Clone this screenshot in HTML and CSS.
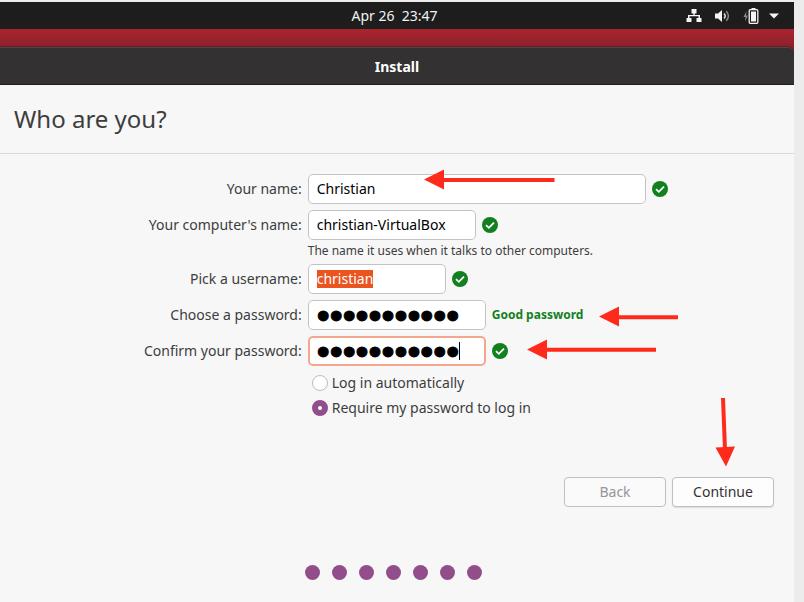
FILE: index.html
```html
<!DOCTYPE html>
<html lang="en">
<head>
<meta charset="utf-8">
<title>Install</title>
<link rel="stylesheet" href="styles.css">
</head>
<body>
<svg class="defs" width="0" height="0" aria-hidden="true">
  <symbol id="ok" viewBox="0 0 16 16">
    <circle cx="8" cy="8" r="8" fill="#12801f"/>
    <path d="M4 8.2l2.8 2.6L12 5.6" fill="none" stroke="#fff" stroke-width="1.8"/>
  </symbol>
</svg>
<div class="screen">
  <header class="topbar">
    <time class="clock">Apr 26&nbsp; 23:47</time>
    <div class="tray">
      <svg width="16" height="14" viewBox="0 0 16 14" fill="#f5f4f0"><path d="M5.500 0h5v4.500H8.700V6H14v3h1.500v4h-5V9h2V7.300h-9V9h2v4h-5V9H2V6h5.300V4.500H5.500z"/></svg>
      <svg class="volume" width="15" height="14" viewBox="0 0 15 14" fill="none"><path d="M0 4.500h3L7 1v12L3 9.500H0z" fill="#f5f4f0"/><path d="M9 4.500q2.400 2.500 0 5" stroke="#e0dfdc" stroke-width="1.500"/><path d="M11.300 2.200q4.200 4.800 0 9.600" stroke="#8a8986" stroke-width="1.500"/></svg>
      <svg class="battery" width="16" height="16" viewBox="0 0 16 16"><path d="M3.500 3L.5 9h2L2 13.500 5 7.500H3z" fill="#888"/><path d="M8.500 .5h4" stroke="#f5f4f0"/><rect x="6.200" y="1.700" width="8.600" height="13.600" rx="1" fill="none" stroke="#f5f4f0" stroke-width="1.300"/><rect x="8" y="3.500" width="5" height="10" fill="#f5f4f0"/></svg>
      <svg class="chevron" width="10" height="6" viewBox="0 0 10 6"><path d="M0 .5h10L5 5.500z" fill="#f5f4f0"/></svg>
    </div>
  </header>
  <div class="desktop">
    <div class="titlebar">Install</div>
  </div>
  <main class="window">
    <h1>Who are you?</h1>
    <form class="form">
      <label class="label" for="name">Your name:</label>
      <div class="field"><span class="entry full"><input id="name" type="text" value="Christian"></span><svg class="ok"><use href="#ok"/></svg></div>

      <label class="label" for="host">Your computer's name:</label>
      <div class="field"><span class="entry host"><input id="host" type="text" value="christian-VirtualBox"></span><svg class="ok"><use href="#ok"/></svg></div>
      <p class="hint">The name it uses when it talks to other computers.</p>

      <label class="label" for="user">Pick a username:</label>
      <div class="field"><span class="entry user"><input class="selected" id="user" type="text" value="christian"></span><svg class="ok"><use href="#ok"/></svg></div>

      <label class="label" for="pass">Choose a password:</label>
      <div class="field"><span class="entry pass"><input id="pass" type="password" value="ubuntu12345"></span><strong class="strength">Good password</strong></div>

      <label class="label" for="confirm">Confirm your password:</label>
      <div class="field"><span class="entry pass focused"><input id="confirm" type="password" value="ubuntu12345"><span class="caret"></span></span><svg class="ok"><use href="#ok"/></svg></div>

      <div class="choices">
        <label class="choice"><input type="radio" name="login">Log in automatically</label>
        <label class="choice"><input type="radio" name="login" checked>Require my password to log in</label>
      </div>
    </form>
    <div class="actions">
      <button type="button" disabled>Back</button>
      <button type="button">Continue</button>
    </div>
    <div class="steps"><i></i><i></i><i></i><i></i><i></i><i></i><i></i></div>
  </main>
  <svg class="arrows" width="794" height="602" viewBox="0 0 794 602" aria-hidden="true">
    <g stroke="#fe2b1c" stroke-width="4" fill="none"><path d="M442 180H554.500M618 317.300H678M545 349.700H656M723 398l2 52"/></g>
    <g fill="#fe2b1c"><path d="M424 179.500l20-10v20zM599 316.500l20-10v20zM527 349.500l20-10v20zM726 466.500l-10.500-19 19.500-1z"/></g>
  </svg>
</div>
</body>
</html>
```
FILE: styles.css
```css
* { box-sizing: border-box; }

body {
  margin: 0;
  background: #ececec;
  color: #3d3d3d;
  font: 14px/20px "Noto Sans", "Open Sans", sans-serif;
}

.defs { position: absolute; }

.screen {
  position: relative;
  display: flex;
  flex-direction: column;
  min-height: 100vh;
  margin-right: 10px;
  padding-top: 2px;
}

.topbar {
  display: grid;
  grid-template-columns: 1fr auto 1fr;
  align-items: center;
  height: 27px;
  padding: 0 15px 0 10px;
  background: #1d1d1d;
  color: #f2f2f2;
}

.clock { grid-column: 2; }

.tray {
  display: flex;
  justify-content: flex-end;
  align-items: center;
}

.volume { margin-left: 13px; }
.battery { margin-left: 13px; }
.chevron { margin-left: 10px; }

.desktop {
  padding-top: 18px;
  background: linear-gradient(#a9252d, #8c202b 18px);
}

.titlebar {
  height: 38px;
  border-top: 1px solid #4a4848;
  border-bottom: 1px solid #251a22;
  border-top-right-radius: 6px;
  background: #333132;
  color: #fff;
  font-weight: 700;
  line-height: 38px;
  text-align: center;
  box-shadow: 0 -1px #701a24;
}

.window {
  flex: 1;
  display: flex;
  flex-direction: column;
  background: #f7f7f7;
}

h1 {
  margin: 0;
  padding: 18px 14px;
  border-bottom: 1px solid #dadada;
  font-size: 24px;
  font-weight: 400;
  line-height: 32px;
}

.form {
  display: grid;
  grid-template-columns: 38% 1fr;
  column-gap: 6px;
  row-gap: 6px;
  padding-top: 20px;
}

.label {
  line-height: 30px;
  text-align: right;
}

.field {
  display: flex;
  align-items: center;
  gap: 6px;
}

.entry {
  display: flex;
  align-items: center;
  height: 30px;
  padding: 0 8px;
  border: 1px solid #c3c3c3;
  border-radius: 5px;
  background: #fff;
  overflow: hidden;
}

.entry input {
  width: 100%;
  padding: 0;
  border: 0;
  outline: 0;
  background: none;
  color: #000;
  font: inherit;
}

.full { width: 338px; }
.host { width: 168px; }
.user { width: 138px; }
.pass { width: 178px; }

.entry .selected {
  width: auto;
  height: 18px;
  field-sizing: content;
  background: #e95420;
  color: #fff;
}

.pass input {
  width: auto;
  padding-top: 2px;
  field-sizing: content;
  font: 37px/28px "Liberation Sans", sans-serif;
  -webkit-text-stroke: 1px #000;
}

.focused {
  padding: 0 7px;
  border: 2px solid #f4a78e;
}

.caret {
  flex: none;
  width: 1px;
  height: 18px;
  background: #000;
}

.ok {
  width: 16px;
  height: 16px;
}

.strength {
  color: #12801f;
  font-size: 12px;
}

.hint {
  grid-column: 2;
  margin: -4px 0 0;
  padding-top: 1px;
  font-size: 12px;
  line-height: 15px;
}

.choices {
  grid-column: 2;
  display: flex;
  flex-direction: column;
  gap: 5px;
  padding: 1px 4px 0;
}

.choice {
  display: flex;
  align-items: center;
  gap: 4px;
}

.choice input {
  appearance: none;
  width: 16px;
  height: 16px;
  margin: 0;
  border: 1px solid #bdbdbd;
  border-radius: 50%;
  background: #fff;
}

.choice input:checked { border: 6px solid #924d8b; }

.actions {
  display: flex;
  justify-content: flex-end;
  gap: 6px;
  padding: 59px 20px 0;
}

button {
  width: 102px;
  height: 30px;
  border: 1px solid #bfbfbf;
  border-radius: 4px;
  background: #fdfdfd;
  box-shadow: 0 1px 1px #dedede;
  color: #333;
  font: inherit;
}

button:disabled {
  background: #fafafa;
  box-shadow: none;
  color: #9b949a;
}

.steps {
  display: flex;
  justify-content: center;
  gap: 12px;
  padding: 58px 7px 22px 0;
}

.steps i {
  width: 15px;
  height: 15px;
  border-radius: 50%;
  background: #924d8b;
}

.arrows {
  position: absolute;
  top: 0;
  left: 0;
  pointer-events: none;
}
```
